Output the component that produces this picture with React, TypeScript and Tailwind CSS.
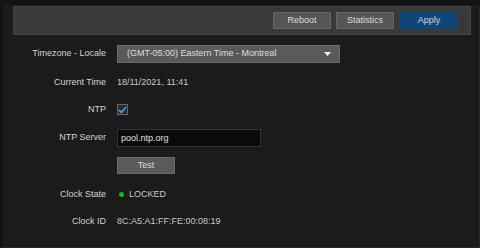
import { useState } from "react";

function Row({ label, children, className = "" }: { label: string; children: React.ReactNode; className?: string }) {
  return (
    <div className={`flex items-center ${className}`}>
      <div className="w-[103px] shrink-0 text-right text-[#d4d4d4]">{label}</div>
      <div className="ml-[11px] flex items-center">{children}</div>
    </div>
  );
}

export default function App() {
  const [ntp, setNtp] = useState(true);
  const [server, setServer] = useState("pool.ntp.org");

  return (
    <div
      className="w-[480px] h-[248px] bg-[#141414] pl-[3px] pt-[5px] overflow-hidden text-[9px]"
      style={{ fontFamily: "'Liberation Sans', Arial, sans-serif" }}
    >
      <div className="h-[243px] bg-[#1b1b1b] border-r border-b border-[#2a2a2a] pt-[1px]">
        {/* toolbar */}
        <div className="ml-[10px] mr-[8px] h-[29px] bg-[#393939] border border-[#444] flex items-center justify-end gap-[5px] pr-[12px]">
          <button className="w-[58px] h-[17px] bg-[#555] border border-[#666] text-[#ddd]">Reboot</button>
          <button className="w-[58px] h-[17px] bg-[#555] border border-[#666] text-[#ddd]">Statistics</button>
          <button className="w-[58px] h-[17px] bg-[#0d4677] text-[#cfd8e0] ml-[1px]">Apply</button>
        </div>

        <div className="flex flex-col">
          <Row label="Timezone - Locale" className="mt-[10px] h-[18px]">
            <div className="w-[223px] h-[18px] bg-[#5a5a5a] border border-[#6a6a6a] flex items-center justify-between pl-[9px] pr-[8px] text-[#ddd]">
              <span>(GMT-05:00) Eastern Time - Montreal</span>
              <svg width="7" height="4" viewBox="0 0 7 4"><path d="M0 0h7L3.5 4z" fill="#eee" /></svg>
            </div>
          </Row>
          <Row label="Current Time" className="mt-[12px] h-[15px]">
            <span className="text-[#c8c8c8]">18/11/2021, 11:41</span>
          </Row>
          <Row label="NTP" className="mt-[12px] h-[15px]">
            <button
              onClick={() => setNtp(!ntp)}
              className="w-[11px] h-[11px] bg-[#2a2a2a] border border-[#666] flex items-center justify-center"
            >
              {ntp && (
                <svg width="9" height="8" viewBox="0 0 9 8">
                  <path d="M1 4l2.5 2.5L8 1" stroke="#4a9de0" strokeWidth="1.8" fill="none" />
                </svg>
              )}
            </button>
          </Row>
          <Row label="NTP Server" className="mt-[12px] h-[18px]">
            <input
              value={server}
              onChange={(e) => setServer(e.target.value)}
              className="w-[144px] h-[18px] bg-[#0a0a0a] border border-[#333] px-[3px] text-[#e0e0e0] outline-none"
            />
          </Row>
          <Row label="" className="mt-[10px] h-[17px]">
            <button className="w-[58px] h-[17px] bg-[#5a5a5a] border border-[#6a6a6a] text-[#ddd]">Test</button>
          </Row>
          <Row label="Clock State" className="mt-[13px] h-[15px]">
            <span className="w-[5px] h-[5px] rounded-full bg-[#18b818] ml-[2px] mr-[5px]" />
            <span className="text-[#c8c8c8]">LOCKED</span>
          </Row>
          <Row label="Clock ID" className="mt-[12px] h-[15px]">
            <span className="text-[#c8c8c8]">8C:A5:A1:FF:FE:00:08:19</span>
          </Row>
        </div>
      </div>
    </div>
  );
}
